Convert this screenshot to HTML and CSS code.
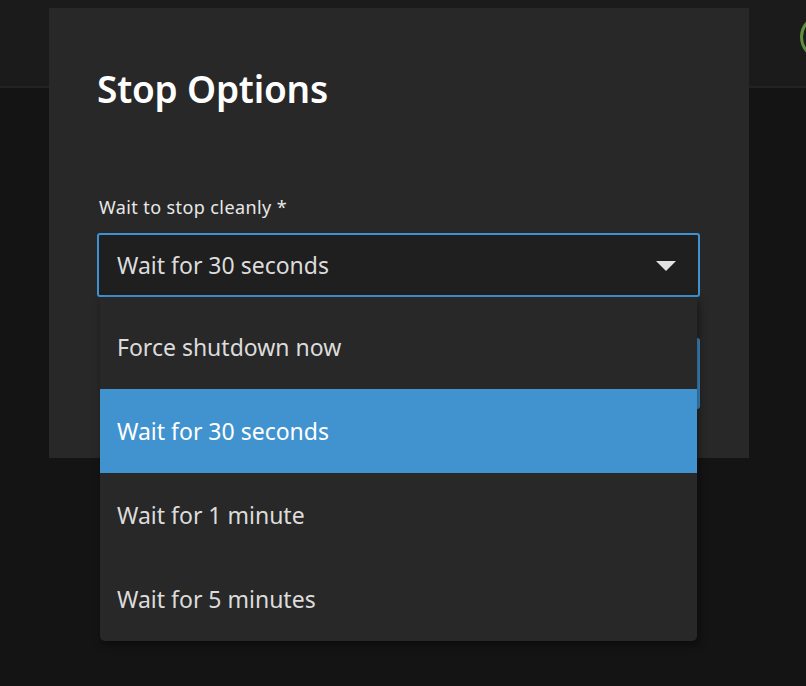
FILE: index.html
```html
<!DOCTYPE html>
<html lang="en">
<head>
<meta charset="utf-8">
<title>Stop Options</title>
<link rel="stylesheet" href="styles.css">
</head>
<body>
<header class="topbar">
  <div class="avatar"></div>
</header>
<div class="dialog">
  <h1 class="title">Stop Options</h1>
  <div class="field">
    <label class="label">Wait to stop cleanly *</label>
    <div class="select">
      <span class="select-value">Wait for 30 seconds</span>
      <svg class="caret" width="20" height="10" viewBox="0 0 20 10"><path d="M0 0 L20 0 L10 10 Z" fill="#e2e2e2"/></svg>
      <ul class="menu">
        <li class="option">Force shutdown now</li>
        <li class="option selected">Wait for 30 seconds</li>
        <li class="option">Wait for 1 minute</li>
        <li class="option">Wait for 5 minutes</li>
      </ul>
    </div>
  </div>
  <div class="footer">
    <button class="btn">Stop</button>
  </div>
</div>
</body>
</html>
```
FILE: styles.css
```css
html, body {
  margin: 0;
  padding: 0;
  height: 100%;
  overflow: hidden;
}
body {
  background: #141414;
  font-family: "Noto Sans", "Open Sans", sans-serif;
  color: #e0e0e0;
}
.topbar {
  height: 86px;
  background: #1b1b1b;
  border-bottom: 2px solid #222222;
  display: flex;
  justify-content: flex-end;
  align-items: center;
}
.avatar {
  width: 40px;
  height: 40px;
  border: 3px solid #5f8f3c;
  border-radius: 50%;
  margin-right: -40px;
  margin-top: -12px;
  flex: none;
}
.dialog {
  position: absolute;
  left: 49px;
  top: 8px;
  width: 700px;
  height: 450px;
  box-sizing: border-box;
  background: #282828;
  padding: 59px 49px 0 48px;
}
.title {
  margin: 0;
  font-size: 37px;
  line-height: 44px;
  font-weight: 600;
  color: #ffffff;
  letter-spacing: -0.2px;
}
.field {
  margin-top: 85px;
}
.label {
  display: block;
  font-size: 18px;
  line-height: 22px;
  color: #e8e8e8;
  padding-left: 2px;
  margin-bottom: 15px;
  letter-spacing: 0.4px;
}
.select {
  position: relative;
  height: 64px;
  box-sizing: border-box;
  border: 2px solid #3f92d2;
  border-radius: 3px;
  background: #1f1f1f;
  display: flex;
  align-items: center;
  justify-content: space-between;
  padding: 0 22px 0 18px;
}
.select-value {
  font-size: 23px;
  color: #dcdcdc;
}
.caret {
  display: block;
  margin-top: 2px;
}
.menu {
  position: absolute;
  left: 1px;
  top: 62px;
  width: 597px;
  margin: 0;
  padding: 8px 0 0 0;
  list-style: none;
  background: #282828;
  border-radius: 0 0 5px 5px;
  box-shadow: 2px 4px 8px rgba(0, 0, 0, 0.45);
  z-index: 2;
}
.option {
  height: 84px;
  display: flex;
  align-items: center;
  padding-left: 17px;
  font-size: 23px;
  color: #dcdcdc;
}
.option.selected {
  background: #4193d0;
  color: #ffffff;
}
.footer {
  display: flex;
  justify-content: flex-end;
  margin-top: 41px;
}
.btn {
  width: 140px;
  height: 71px;
  background: #3f8fcc;
  border: none;
  border-radius: 3px;
  color: #ffffff;
  font-family: inherit;
  font-size: 18px;
}
```
